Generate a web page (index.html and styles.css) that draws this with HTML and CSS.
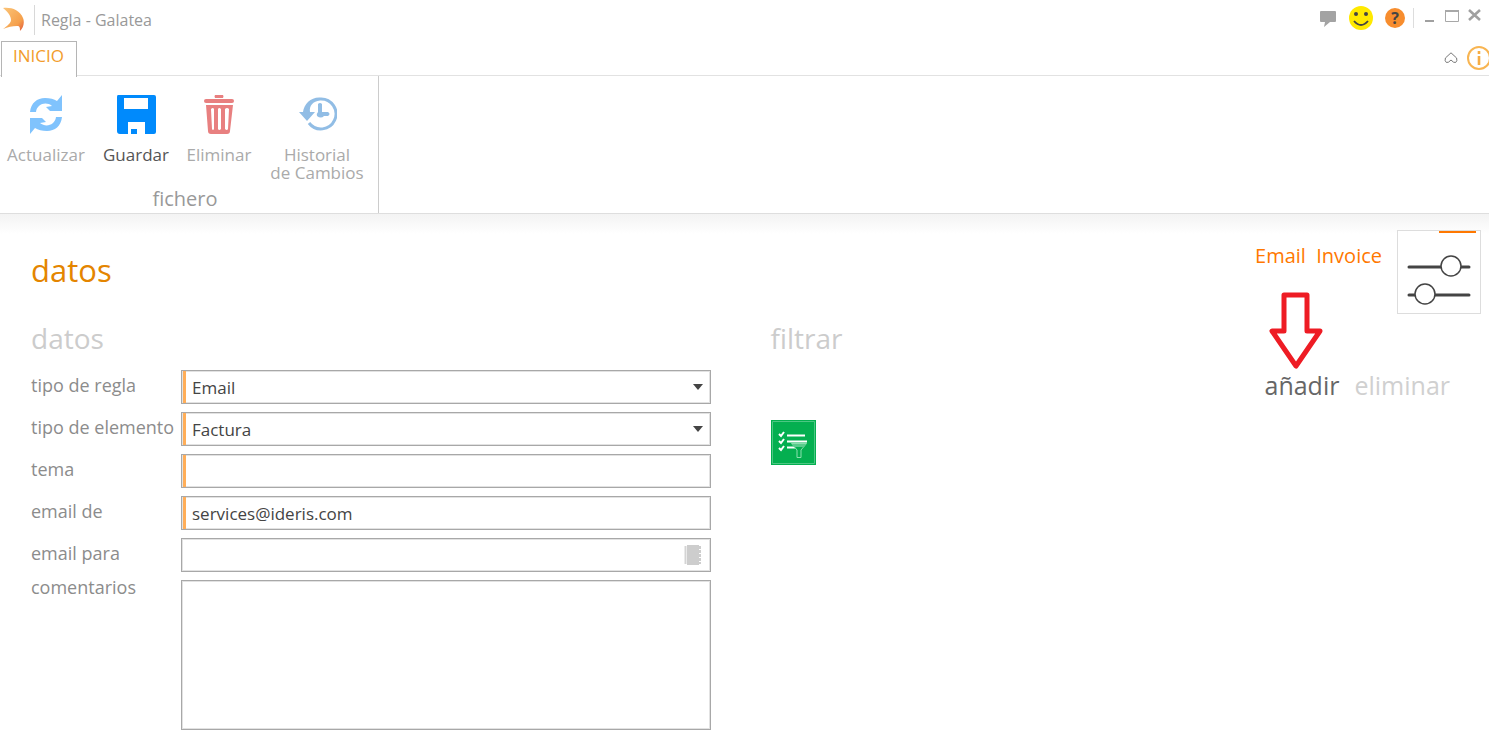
FILE: index.html
```html
<!DOCTYPE html>
<html lang="es">
<head>
  <meta charset="UTF-8">
  <meta name="viewport" content="width=device-width, initial-scale=1">
  <title>Regla - Galatea</title>
  <link rel="stylesheet" href="styles.css">
</head>
<body>

<header class="titlebar">
  <svg class="logo" width="24" height="32" viewBox="0 0 24 32">
    <defs>
      <linearGradient id="flame" x1="0" y1="0" x2="1" y2="1">
        <stop offset="0" stop-color="#fbc477"/>
        <stop offset="0.7" stop-color="#f5a04c"/>
        <stop offset="1" stop-color="#e0563c"/>
      </linearGradient>
    </defs>
    <path fill="url(#flame)" d="M3 8C11 7 20 10 23 18C25 23 23 28 20 31C20 28 20 26 17 26C12 26 8 27 3 29C7 26 11 23 11 20C11 16 8 12 3 8z"/>
  </svg>
  <span class="title">Regla - Galatea</span>
  <div class="window-tools">
    <button type="button" aria-label="Comentarios">
      <svg width="18" height="18" viewBox="0 0 18 18"><path fill="#a3a3a3" d="M2 2h14q1 0 1 1v9q0 1-1 1h-5l-6 5 1-5H2q-1 0-1-1V3q0-1 1-1z"/></svg>
    </button>
    <button type="button" aria-label="Opinar">
      <svg width="24" height="24" viewBox="0 0 24 24"><circle cx="12" cy="12" r="12" fill="#ffe900"/><circle cx="7" cy="8" r="2" fill="#444"/><circle cx="17" cy="8" r="2" fill="#444"/><path d="M5 15q7 8 14 0" fill="none" stroke="#444" stroke-width="1.800"/></svg>
    </button>
    <button type="button" class="help" aria-label="Ayuda">?</button>
    <div class="window-buttons">
      <button type="button" aria-label="Minimizar"><svg width="16" height="16" viewBox="0 0 16 16"><path d="M4 13h9" stroke="#a0a0a0" stroke-width="2"/></svg></button>
      <button type="button" aria-label="Maximizar"><svg width="16" height="16" viewBox="0 0 16 16"><path d="M1.500 3.500h13v10h-13z" fill="none" stroke="#a8a8a8"/><path d="M1 3h14" stroke="#a8a8a8" stroke-width="2"/></svg></button>
      <button type="button" aria-label="Cerrar"><svg width="16" height="16" viewBox="0 0 16 16"><path d="M2 2l11 10M13 2L2 12" stroke="#a0a0a0" stroke-width="2.600"/></svg></button>
    </div>
  </div>
</header>

<nav class="tabs">
  <a href="#inicio" class="tab">INICIO</a>
  <div class="tab-tools">
    <button type="button" aria-label="Contraer"><svg width="14" height="12" viewBox="0 0 14 12"><path d="M7 .8L12.600 6q1 3-1 4.500-2 .5-4.600-2.500-2.600 3-4.600 2.500-2-1.500-1-4.500z" fill="none" stroke="#777"/></svg></button>
    <button type="button" aria-label="Información"><svg width="22" height="24" viewBox="0 0 22 24"><circle cx="12" cy="12" r="11" fill="none" stroke="#f8b552" stroke-width="2"/><path d="M12 5v3M12 10v9" stroke="#f6ad44" stroke-width="2.600"/></svg></button>
  </div>
</nav>

<div class="ribbon" id="inicio">
  <div class="group">
    <div class="actions">
      <button type="button" class="action refresh">
        <svg width="40" height="40" viewBox="0 0 40 40"><g fill="#80c3fd"><path id="turn" d="M4 17C5 8 11 3 19 3C24 3 28 4 31 6L36 0V16H24L20 12L26 11C20 6 11 9 10 17z"/><use href="#turn" transform="rotate(180 20 19.500)"/></g></svg>
        <span>Actualizar</span>
      </button>
      <button type="button" class="action save">
        <svg width="40" height="40" viewBox="0 0 40 40"><path fill="#008afc" fill-rule="evenodd" d="M2 0h36q2 0 2 2v35q0 2-2 2h-9V27H12v12H4q-3 0-3-3V2q0-2 1-2zM8 3v11h24V3z"/><path fill="#008afc" d="M15 34h6v5h-6z"/></svg>
        <span>Guardar</span>
      </button>
      <button type="button" class="action delete">
        <svg width="40" height="40" viewBox="0 0 40 40"><g fill="#e88080"><path d="M16 0h8q1 1 0 3h-8q-1-2 0-3z"/><rect x="5" y="4" width="30" height="4" rx="2"/><path fill-rule="evenodd" d="M7 10h27l-3 26q0 3-3 3H12q-3 0-3-3zM12 14l1 20q1 2 2 0l0-20q-1-2-3 0zM19 14v20q1 2 3 0V14q-2-2-3 0zM26 14v20q2 2 3 0l1-20q-2-2-4 0z"/></g></svg>
        <span>Eliminar</span>
      </button>
      <button type="button" class="action history">
        <svg width="40" height="40" viewBox="0 0 40 40"><path fill="none" stroke="#91bde5" stroke-width="3" d="M23 4a15 15 0 1 1-11 24"/><path fill="#91bde5" d="M2 17h16l-8 9zM6 17C7 9 14 2 23 2.500v3C16 6 12 11 13 17zM21 9q2-2 4 0v8h6q3 2 0 4h-4q-3 3-7 0-1-2 1-4z"/></svg>
        <span>Historial<br>de Cambios</span>
      </button>
    </div>
    <div class="group-name">fichero</div>
  </div>
</div>

<main>
  <div class="page-head">
    <h1>datos</h1>
    <div class="rule-name">Email&nbsp; Invoice</div>
    <div class="rule-icon">
      <svg width="82" height="82" viewBox="0 0 82 82"><path d="M41 0h37v2H41z" fill="#ff7800"/><path d="M11 36h60M11 64h60" stroke="#444" stroke-width="3" stroke-linecap="round"/><g fill="#fff" stroke="#444" stroke-width="1.500"><circle cx="53" cy="35" r="10"/><circle cx="27" cy="63" r="10"/></g></svg>
    </div>
  </div>

  <div class="columns">
    <form>
      <h2>datos</h2>
      <div class="row">
        <label for="tipoRegla">tipo de regla</label>
        <div class="field required select">
          <select id="tipoRegla"><option>Email</option></select>
        </div>
      </div>
      <div class="row">
        <label for="tipoElemento">tipo de elemento</label>
        <div class="field required select">
          <select id="tipoElemento"><option>Factura</option></select>
        </div>
      </div>
      <div class="row">
        <label for="tema">tema</label>
        <div class="field required"><input type="text" id="tema"></div>
      </div>
      <div class="row">
        <label for="emailDe">email de</label>
        <div class="field required"><input type="text" id="emailDe" value="services@ideris.com"></div>
      </div>
      <div class="row">
        <label for="emailPara">email para</label>
        <div class="field">
          <input type="text" id="emailPara">
          <button type="button" class="book" aria-label="Contactos">
            <svg width="18" height="20" viewBox="0 0 18 20"><path fill="#cdcdcd" d="M3 0h12v20H3z"/><path d="M1.500 1v18" stroke="#d4d4d4" stroke-width="2"/><path d="M16 1v18" stroke="#cdcdcd" stroke-width="2" stroke-dasharray="3 1"/></svg>
          </button>
        </div>
      </div>
      <div class="row">
        <label for="comentarios" class="top">comentarios</label>
        <textarea id="comentarios"></textarea>
      </div>
    </form>

    <section class="filter">
      <h2>filtrar</h2>
      <div class="filter-actions">
        <div class="add">
          <button type="button">añadir</button>
          <svg class="arrow" width="54" height="80" viewBox="0 0 54 80"><path d="M15 5h23v36h13L27 76 3 41h12z" fill="#fff" stroke="#ee1c24" stroke-width="5" stroke-linejoin="round"/></svg>
        </div>
        <button type="button" disabled>eliminar</button>
      </div>
      <button type="button" class="filter-tile" aria-label="Filtro">
        <svg width="45" height="45" viewBox="0 0 45 45"><path fill="#04af50" d="M0 0h45v45H0z"/><path fill="none" stroke="#4cc783" d="M1.500 1.500h42v42h-42z"/><path fill="none" stroke="#fff" stroke-width="2" d="M8 14l2 2 3-4M8 21l2 2 3-4M8 28l2 2 3-4M16 15.500h18M16 21.500h20M16 27.500h9"/><path fill="#04af50" stroke="#8be0ae" d="M20.500 23.500h15L30 30v7.500h-4V30z"/><path fill="#59cb8b" d="M21 24h14l-2 3H23z"/></svg>
      </button>
    </section>
  </div>
</main>

</body>
</html>
```
FILE: styles.css
```css
* {
  box-sizing: border-box;
}

body {
  margin: 0;
  background: #fff;
  font-family: "Open Sans", "Noto Sans", sans-serif;
  color: #444;
}

button {
  background: none;
  border: none;
  padding: 0;
  font-family: inherit;
  color: inherit;
  cursor: pointer;
}

svg {
  display: block;
}

h1, h2 {
  margin: 0;
  font-weight: 400;
}

/* title bar */
.titlebar {
  display: flex;
  align-items: flex-start;
  height: 40px;
}

.title {
  margin: 5px 0 0 10px;
  padding-left: 6px;
  border-left: 1px solid #d8d8d8;
  font-size: 16px;
  line-height: 30px;
  color: #999;
}

.window-tools {
  display: flex;
  align-items: center;
  gap: 12px;
  height: 36px;
  margin-left: auto;
  padding-right: 6px;
}

.help {
  width: 20px;
  height: 20px;
  border-radius: 50%;
  background: #f78d2e;
  color: #444;
  font-size: 16px;
  font-weight: 700;
  line-height: 20px;
}

.window-buttons {
  display: flex;
  align-items: flex-start;
  gap: 7px;
  height: 20px;
  margin-left: -4px;
  padding-left: 7px;
  border-left: 1px solid #ddd;
}

/* tabs */
.tabs {
  display: flex;
  height: 36px;
  border-bottom: 1px solid #e2e2e2;
}

.tab {
  height: 36px;
  margin: 1px 0 0 1px;
  padding: 0 12px 0 11px;
  border: 1px solid #b5b5b5;
  border-bottom: none;
  background: #fff;
  font-size: 17px;
  line-height: 28px;
  color: #f29c2b;
  text-decoration: none;
}

.tab-tools {
  display: flex;
  align-items: center;
  gap: 9px;
  margin-left: auto;
}

/* ribbon */
.ribbon {
  display: flex;
  height: 137px;
}

.group {
  display: flex;
  flex-direction: column;
  justify-content: space-between;
  width: 379px;
  border-right: 1px solid #ccc;
}

.actions {
  display: flex;
  align-items: flex-start;
  padding: 19px 0 0 1px;
}

.action {
  display: flex;
  flex-direction: column;
  align-items: center;
  gap: 11px;
  width: 90px;
  font-size: 17px;
  line-height: 18px;
  color: #aaa;
}

.delete {
  width: 76px;
}

.history {
  width: 120px;
}

.save {
  color: #555;
}

.group-name {
  padding-right: 8px;
  font-size: 20px;
  line-height: 28px;
  color: #999;
  text-align: center;
}

/* content */
main {
  padding: 16px 8px 26px 31px;
  border-top: 1px solid #dedede;
  background: linear-gradient(#f3f3f3, #fff 20px);
}

.page-head {
  display: flex;
  align-items: flex-start;
}

h1 {
  font-size: 31px;
  line-height: 80px;
  color: #e48500;
}

.rule-name {
  margin-left: auto;
  padding-right: 15px;
  font-size: 20px;
  line-height: 52px;
  color: #ff7800;
}

.rule-icon {
  border: 1px solid #ddd;
  background: #fff;
}

.columns {
  display: grid;
  grid-template-columns: 1fr 1fr;
  gap: 60px;
  padding-right: 31px;
}

h2 {
  font-size: 28px;
  line-height: 48px;
  margin-bottom: 8px;
  color: #ccc;
}

.row {
  display: flex;
  align-items: flex-start;
  margin-bottom: 8px;
}

.row label {
  width: 150px;
  font-size: 18px;
  line-height: 30px;
  color: #8c8c8c;
  white-space: nowrap;
}

.row label.top {
  line-height: 14px;
}

.field {
  position: relative;
  display: flex;
  align-items: center;
  flex: 1;
  height: 34px;
  border: 1px solid #a8a8a8;
  box-shadow: inset 0 0 0 1px #e2e2e2;
}

.required::before {
  content: "";
  align-self: stretch;
  width: 3px;
  margin-left: 1px;
  background: #ffae59;
}

.select::after {
  content: "";
  position: absolute;
  right: 7px;
  border: 5px solid transparent;
  border-top: 6px solid #444;
  border-bottom: none;
  pointer-events: none;
}

.field input,
.field select {
  flex: 1;
  min-width: 0;
  padding: 1px 6px 0;
  border: none;
  outline: none;
  background: none;
  appearance: none;
  font-family: inherit;
  font-size: 17px;
  line-height: 30px;
  color: #444;
}

.book {
  margin-right: 8px;
}

textarea {
  flex: 1;
  height: 150px;
  border: 1px solid #a8a8a8;
  box-shadow: inset 0 0 0 1px #e2e2e2;
  outline: none;
  resize: none;
  font-family: inherit;
  font-size: 17px;
}

/* filter */
.filter-actions {
  display: flex;
  justify-content: flex-end;
  gap: 15px;
  margin-bottom: 20px;
}

.filter-actions button {
  font-size: 25px;
  line-height: 30px;
  color: #666;
}

.filter-actions button:disabled {
  color: #d0d0d0;
}

.add {
  position: relative;
}

.arrow {
  position: absolute;
  left: 5px;
  bottom: 30px;
}
```
